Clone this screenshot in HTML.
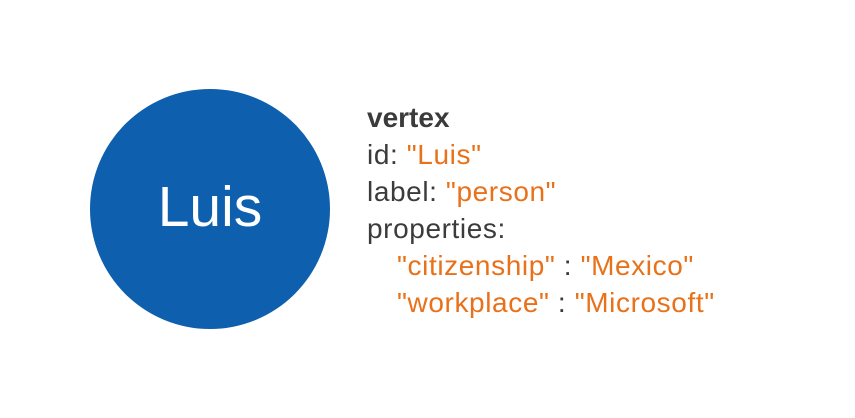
<!DOCTYPE html>
<html><head><meta charset="utf-8"><style>
html,body{margin:0;padding:0;background:#fff;width:855px;height:418px;overflow:hidden;position:relative;font-family:"Liberation Sans",sans-serif}
.c{position:absolute;left:90px;top:89px;width:240px;height:240px;border-radius:50%;background:#0e5fae}
.n{position:absolute;left:90px;width:240px;text-align:center;top:167px;font-size:57px;line-height:80px;color:#fff}
.l{position:absolute;left:367px;font-size:28px;letter-spacing:0.6px;line-height:37px;color:#3b3b3b;white-space:nowrap}
.o{color:#e8711a}
</style></head><body>
<div class="c"></div>
<div class="n">Luis</div>
<div class="l" style="top:99px;font-weight:bold;letter-spacing:0">vertex</div>
<div class="l" style="top:136px">id: <span class="o">"Luis"</span></div>
<div class="l" style="top:173px">label: <span class="o">"person"</span></div>
<div class="l" style="top:210px">properties:</div>
<div class="l" style="top:247px;left:397px"><span class="o">"citizenship"</span> : <span class="o">"Mexico"</span></div>
<div class="l" style="top:284px;left:397px"><span class="o">"workplace"</span> : <span class="o">"Microsoft"</span></div>
</body></html>
